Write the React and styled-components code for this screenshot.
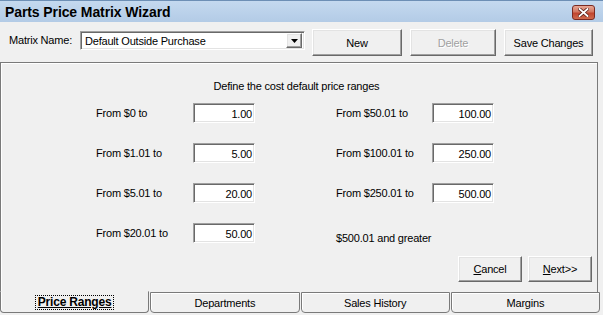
import React from "react"
import styled, { createGlobalStyle, css } from "styled-components"

const GlobalStyle = createGlobalStyle`
    html, body {
        margin: 0;
        padding: 0;
        background: #f0f0f0;
        overflow: hidden;
    }
    * {
        box-sizing: border-box;
    }
`;

const raised = css`
    border: 1px solid;
    border-color: #ffffff #696969 #696969 #ffffff;
    box-shadow: inset -1px -1px 0 #a0a0a0, inset 1px 1px 0 #e3e3e3;
`;

const sunken = css`
    border: 1px solid;
    border-color: #a0a0a0 #ffffff #ffffff #a0a0a0;
    box-shadow: inset 1px 1px 0 #696969, inset -1px -1px 0 #e3e3e3;
`;

const Window = styled.div`
    width: 603px;
    height: 315px;
    display: flex;
    flex-direction: column;
    background: #f0f0f0;
    font-family: "Liberation Sans", Arial, sans-serif;
    font-size: 11px;
    letter-spacing: -0.2px;
    color: #000;
`;

const TitleBar = styled.div`
    height: 22px;
    flex: none;
    display: flex;
    align-items: center;
    justify-content: space-between;
    padding: 0 8px 0 5px;
    border-top: 1px solid #6d8fb5;
    background: linear-gradient(#c4d9ef, #b3cbe6);
`;

const Title = styled.div`
    font-size: 14px;
    font-weight: 700;
    letter-spacing: -0.1px;
`;

const CloseButton = styled.div`
    width: 23px;
    height: 15px;
    border-radius: 3px;
    border: 1px solid #7a2a22;
    background: linear-gradient(#e8a795, #d27661 45%, #c0452f 55%, #cf6a4e);
    display: flex;
    align-items: center;
    justify-content: center;
    margin-top: 1px;
`;

const Toolbar = styled.div`
    height: 40px;
    flex: none;
    display: flex;
    align-items: flex-start;
    padding: 7px 0 0 9px;
`;

const FieldLabel = styled.div`
    width: 71px;
    margin-top: 4px;
    line-height: 14px;
`;

const Combo = styled.div`
    ${sunken};
    width: 225px;
    height: 19px;
    margin-top: 2px;
    background: #fff;
    display: flex;
    align-items: center;
    padding: 2px 2px 2px 4px;
`;

const ComboText = styled.div`
    flex: 1;
    line-height: 14px;
`;

const ComboArrow = styled.div`
    ${raised};
    width: 16px;
    height: 15px;
    background: #f0f0f0;
    display: flex;
    align-items: center;
    justify-content: center;
`;

const Button = styled.button`
    ${raised};
    width: ${p => p.$w}px;
    height: ${p => p.$h || 27}px;
    margin-left: ${p => p.$gap || 0}px;
    background: #f0f0f0;
    font-family: inherit;
    font-size: 11px;
    letter-spacing: inherit;
    color: #000;
    padding: 0;
    &:disabled {
        color: #a0a0a0;
        text-shadow: 1px 1px 0 #fff;
    }
`;

const Key = styled.span`
    text-decoration: underline;
`;

const TabFrame = styled.div`
    flex: 1;
    display: flex;
    flex-direction: column;
    width: 600px;
    padding-bottom: 3px;
`;

const Page = styled.div`
    flex: 1;
    margin-right: 2px;
    border: 1px solid #7a7a7a;
    border-bottom: none;
    box-shadow: inset 1px 1px 0 #fff;
    display: flex;
    flex-direction: column;
    padding: 16px 5px 10px 0;
`;

const Heading = styled.div`
    text-align: center;
    line-height: 14px;
`;

const RangeGrid = styled.div`
    display: grid;
    grid-template-columns: 97px 62px 81px 96px 62px;
    grid-auto-rows: 20px;
    row-gap: 20px;
    margin: 10px 0 0 95px;
`;

const RangeLabel = styled.div`
    grid-column: ${p => p.$col};
    align-self: center;
    line-height: 14px;
    white-space: nowrap;
    margin-top: ${p => p.$drop || 0}px;
`;

const Amount = styled.div`
    ${sunken};
    grid-column: ${p => p.$col};
    background: #fff;
    text-align: right;
    padding: 3px 2px 0 0;
    line-height: 14px;
`;

const Footer = styled.div`
    display: flex;
    justify-content: flex-end;
    gap: 6px;
    margin-top: 13px;
`;

const TabStrip = styled.div`
    height: 21px;
    flex: none;
    display: flex;
`;

const Tab = styled.div`
    flex: 1;
    display: flex;
    align-items: center;
    justify-content: center;
    border: 1px solid #7a7a7a;
    border-top-color: ${p => (p.$active ? "transparent" : "#7a7a7a")};
    border-radius: 0 0 4px 4px;
    box-shadow: ${p => (p.$active ? "inset 1px 0 0 #fff" : "inset 1px 1px 0 #fff")};
    margin-left: ${p => (p.$first ? 0 : 1)}px;
    margin-top: ${p => (p.$active ? -1 : 0)}px;
    background: #f0f0f0;
`;

const TabText = styled.span`
    ${p => p.$active && css`
        font-weight: 700;
        font-size: 12px;
        text-decoration: underline;
        outline: 1px dotted #000;
        padding: 0 2px;
        line-height: 13px;
    `}
`;

const left = [
    ["From $0 to", "1.00"],
    ["From $1.01 to", "5.00"],
    ["From $5.01 to", "20.00"],
    ["From $20.01 to", "50.00"],
];

const right = [
    ["From $50.01 to", "100.00"],
    ["From $100.01 to", "250.00"],
    ["From $250.01 to", "500.00"],
];

const tabs = ["Price Ranges", "Departments", "Sales History", "Margins"];

export default function App() {
    return (
        <Window>
            <GlobalStyle />
            <TitleBar>
                <Title>Parts Price Matrix Wizard</Title>
                <CloseButton>
                    <svg width="11" height="9" viewBox="0 0 11 9">
                        <path d="M1.5 1 L9.5 8 M9.5 1 L1.5 8" stroke="#5a2018" strokeWidth="3.4" strokeLinecap="square" />
                        <path d="M1.5 1 L9.5 8 M9.5 1 L1.5 8" stroke="#fff" strokeWidth="1.8" strokeLinecap="square" />
                    </svg>
                </CloseButton>
            </TitleBar>
            <Toolbar>
                <FieldLabel>Matrix Name:</FieldLabel>
                <Combo>
                    <ComboText>Default Outside Purchase</ComboText>
                    <ComboArrow>
                        <svg width="7" height="4" viewBox="0 0 7 4">
                            <path d="M0 0 H7 L3.5 4 Z" fill="#000" />
                        </svg>
                    </ComboArrow>
                </Combo>
                <Button $w={90} $gap={7}>New</Button>
                <Button $w={86} $gap={8} disabled>Delete</Button>
                <Button $w={89} $gap={8}>Save Changes</Button>
            </Toolbar>
            <TabFrame>
                <Page>
                    <Heading>Define the cost default price ranges</Heading>
                    <RangeGrid>
                        {left.map(([label, value], i) => (
                            <React.Fragment key={label}>
                                <RangeLabel $col={1} style={{ gridRow: i + 1 }}>{label}</RangeLabel>
                                <Amount $col={2} style={{ gridRow: i + 1 }}>{value}</Amount>
                            </React.Fragment>
                        ))}
                        {right.map(([label, value], i) => (
                            <React.Fragment key={label}>
                                <RangeLabel $col={4} style={{ gridRow: i + 1 }}>{label}</RangeLabel>
                                <Amount $col={5} style={{ gridRow: i + 1 }}>{value}</Amount>
                            </React.Fragment>
                        ))}
                        <RangeLabel $col="4 / span 2" $drop={10} style={{ gridRow: 4 }}>$500.01 and greater</RangeLabel>
                    </RangeGrid>
                    <Footer>
                        <Button $w={64} $h={26}><Key>C</Key>ancel</Button>
                        <Button $w={64} $h={26}><Key>N</Key>ext&gt;&gt;</Button>
                    </Footer>
                </Page>
                <TabStrip>
                    {tabs.map((t, i) => (
                        <Tab key={t} $active={i === 0} $first={i === 0}>
                            <TabText $active={i === 0}>{t}</TabText>
                        </Tab>
                    ))}
                </TabStrip>
            </TabFrame>
        </Window>
    )
}
